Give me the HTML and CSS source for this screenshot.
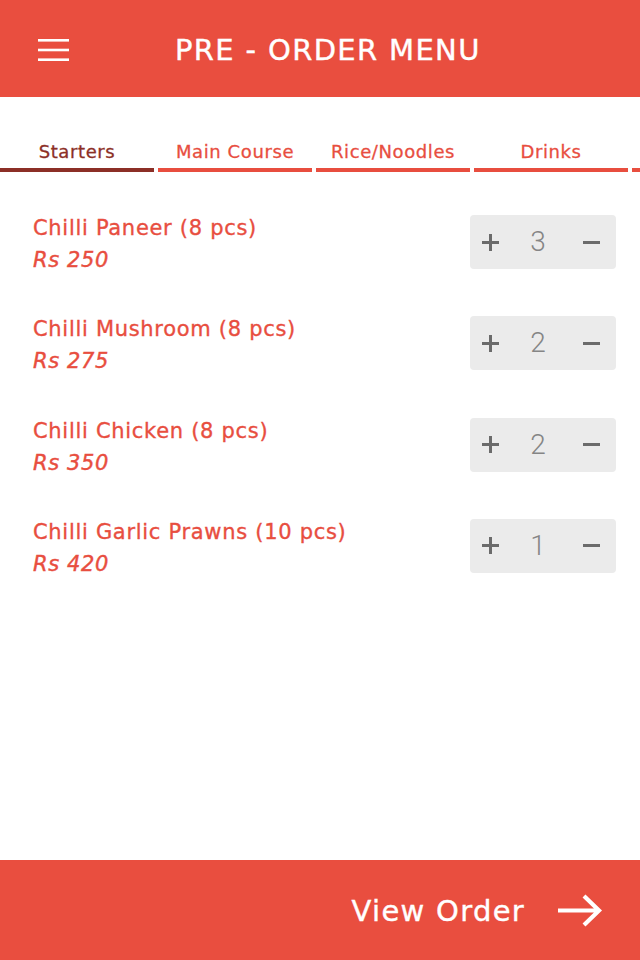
FILE: index.html
```html
<!DOCTYPE html>
<html lang="en">
<head>
<meta charset="utf-8">
<title>Pre-Order Menu</title>
<link rel="stylesheet" href="styles.css">
</head>
<body>
<div class="app">
  <header class="topbar">
    <button class="menu-btn" aria-label="Menu">
      <svg width="31" height="22" viewBox="0 0 31 22"><rect x="0" y="0" width="31" height="2.6" fill="#fff"/><rect x="0" y="9.7" width="31" height="2.6" fill="#fff"/><rect x="0" y="19.4" width="31" height="2.6" fill="#fff"/></svg>
    </button>
    <h1 class="title">PRE - ORDER MENU</h1>
  </header>

  <nav class="tabs">
    <div class="tab active">Starters</div>
    <div class="tab">Main Course</div>
    <div class="tab">Rice/Noodles</div>
    <div class="tab">Drinks</div>
    <div class="tab"></div>
  </nav>

  <main class="items">
    <div class="item">
      <div class="info"><div class="name">Chilli Paneer (8 pcs)</div><div class="price">Rs 250</div></div>
      <div class="stepper"><span class="op plus"></span><span class="qty">3</span><span class="op minus"></span></div>
    </div>
    <div class="item">
      <div class="info"><div class="name">Chilli Mushroom (8 pcs)</div><div class="price">Rs 275</div></div>
      <div class="stepper"><span class="op plus"></span><span class="qty">2</span><span class="op minus"></span></div>
    </div>
    <div class="item">
      <div class="info"><div class="name">Chilli Chicken (8 pcs)</div><div class="price">Rs 350</div></div>
      <div class="stepper"><span class="op plus"></span><span class="qty">2</span><span class="op minus"></span></div>
    </div>
    <div class="item">
      <div class="info"><div class="name">Chilli Garlic Prawns (10 pcs)</div><div class="price">Rs 420</div></div>
      <div class="stepper"><span class="op plus"></span><span class="qty">1</span><span class="op minus"></span></div>
    </div>
  </main>

  <footer class="footer">
    <span class="view">View Order</span>
    <svg class="arrow" width="46" height="33" viewBox="0 0 46 33"><path d="M1 16.5 H42 M27 2 L42 16.5 L27 31" fill="none" stroke="#fff" stroke-width="4.2" stroke-linecap="butt" stroke-linejoin="miter"/></svg>
  </footer>
</div>
</body>
</html>
```

FILE: styles.css
```css
* { box-sizing: border-box; }
html, body { margin: 0; padding: 0; }
body {
  font-family: "DejaVu Sans", "Noto Sans", sans-serif;
  color: #e84e3f;
  background: #fff;
}
.app {
  width: 640px;
  height: 960px;
  display: flex;
  flex-direction: column;
  overflow: hidden;
}
.topbar {
  height: 97px;
  flex: 0 0 97px;
  background: #e94e3f;
  display: flex;
  align-items: center;
  padding-left: 38px;
}
.menu-btn {
  background: none;
  border: 0;
  padding: 0;
  width: 31px;
  height: 22px;
  display: block;
  margin-top: 2px;
}
.menu-btn svg { display: block; }
.title {
  margin: 3px 0 0 106px;
  font-size: 29px;
  font-weight: normal;
  color: #fff;
  letter-spacing: 1.35px;
  line-height: 1;
  -webkit-text-stroke: 0.4px #fff;
}
.tabs {
  display: flex;
  gap: 4px;
  margin-top: 44px;
}
.tab {
  flex: 0 0 154px;
  text-align: center;
  font-size: 18px;
  line-height: 22px;
  padding-bottom: 5px;
  border-bottom: 4px solid #e84e3f;
  color: #e84e3f;
  letter-spacing: 0.6px;
  -webkit-text-stroke: 0.3px #e84e3f;
}
.tab.active {
  color: #8c2f26;
  border-bottom-color: #8c2f26;
  -webkit-text-stroke-color: #8c2f26;
}
.items {
  display: flex;
  flex-direction: column;
  gap: 47.3px;
  padding: 43px 24px 0 33px;
}
.item {
  display: flex;
  align-items: center;
  justify-content: space-between;
  height: 54px;
}
.info {
  margin-top: 4px;
}
.name {
  font-size: 21px;
  line-height: 32px;
  letter-spacing: 0.7px;
  -webkit-text-stroke: 0.35px #e84e3f;
}
.price {
  font-size: 21px;
  line-height: 32px;
  font-style: italic;
  letter-spacing: 0.6px;
  -webkit-text-stroke: 0.4px #e84e3f;
}
.stepper {
  width: 146px;
  height: 54px;
  background: #ebebeb;
  border-radius: 4px;
  display: flex;
  align-items: center;
  justify-content: space-between;
  padding: 0 16px 0 12px;
}
.op {
  width: 17px;
  height: 17px;
  position: relative;
  display: block;
}
.op::before, .op::after {
  content: "";
  position: absolute;
  background: #6b6b6b;
}
.op::before {
  left: 0; right: 0; top: 7px; height: 3px;
}
.plus::after {
  top: 0; bottom: 0; left: 7px; width: 3px;
}
.qty {
  font-family: Roboto, "Liberation Sans", sans-serif;
  font-weight: 300;
  font-size: 28px;
  color: #858585;
  line-height: 1;
  margin-right: 6px;
}
.footer {
  margin-top: auto;
  height: 100px;
  flex: 0 0 100px;
  background: #e94e3f;
  display: flex;
  align-items: center;
  justify-content: flex-end;
  padding-right: 37px;
  gap: 32px;
}
.view {
  color: #fff;
  font-size: 29px;
  letter-spacing: 1.3px;
  -webkit-text-stroke: 0.4px #fff;
  margin-top: 2px;
}
.arrow { display: block; }
```
